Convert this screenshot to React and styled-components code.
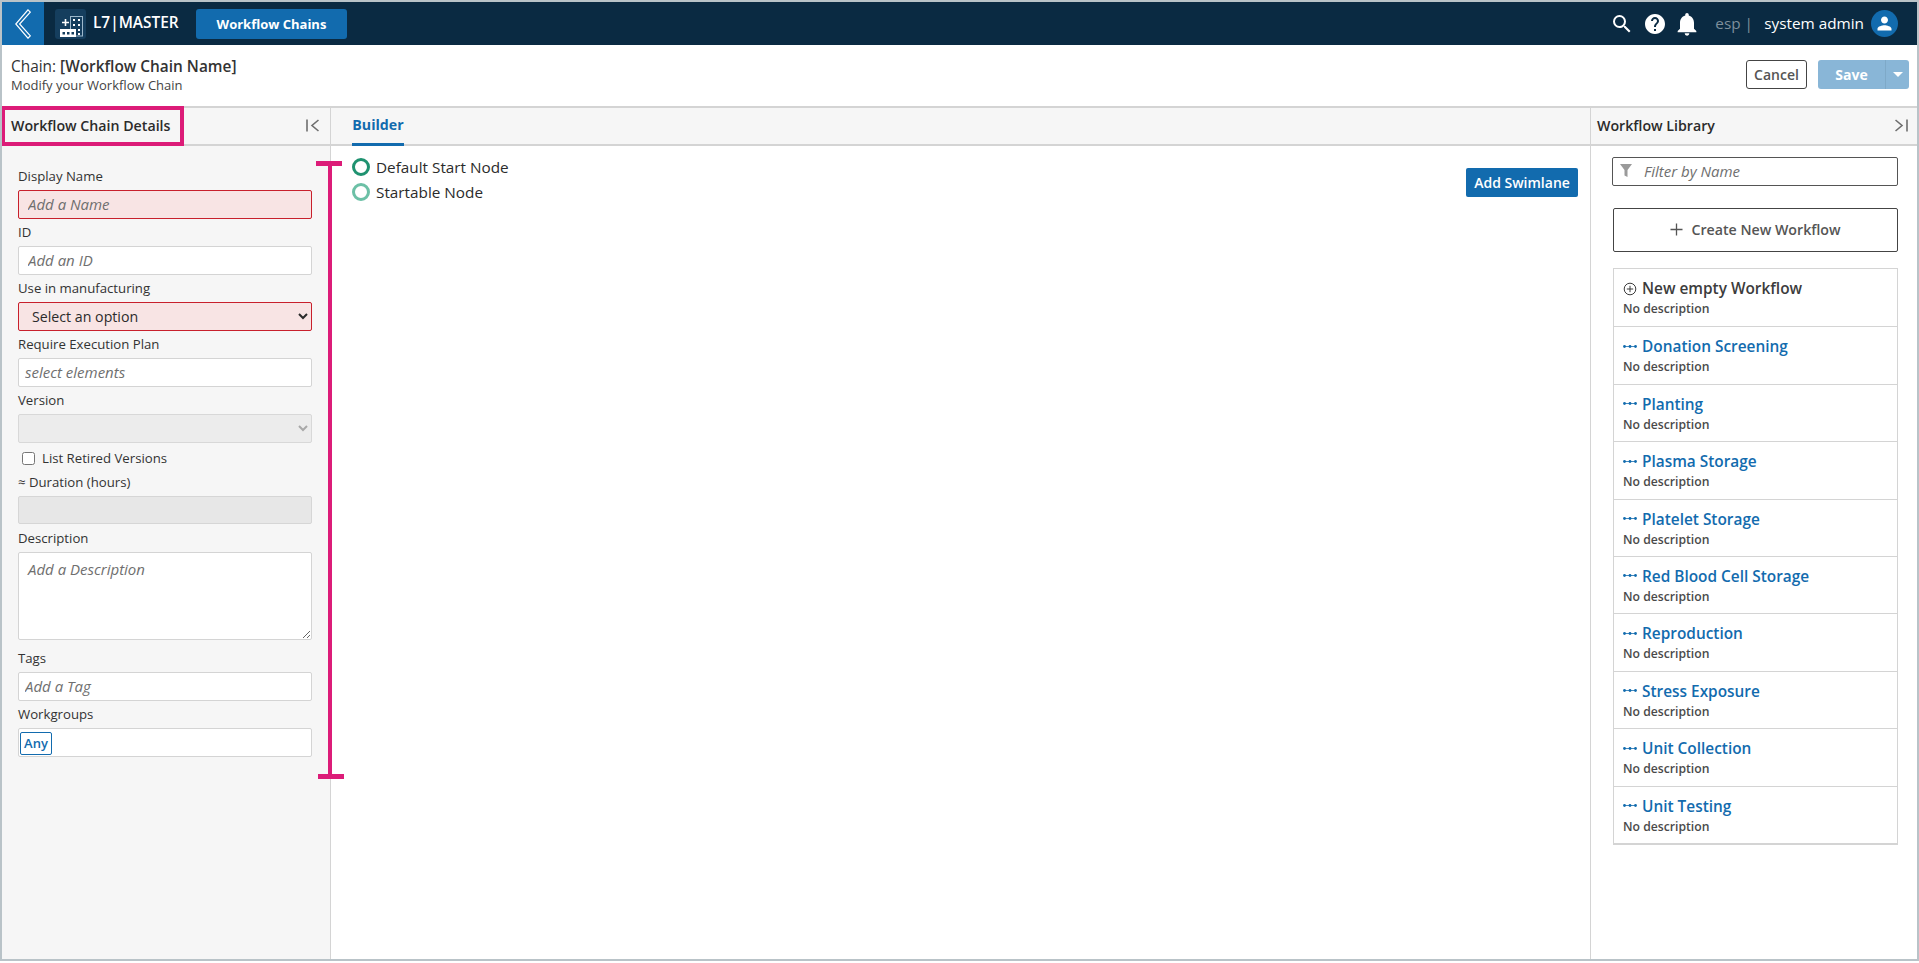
import React from 'react';
import styled, { createGlobalStyle } from 'styled-components';
import { MdSearch, MdHelp, MdNotifications, MdPerson } from 'react-icons/md';

const Global = createGlobalStyle`
  html, body { margin: 0; padding: 0; background: #fff; }
  body { font-family: "Open Sans", "Liberation Sans", sans-serif; color: #2b2b2b; }
  * { box-sizing: border-box; }
`;

const Frame = styled.div`
  position: relative;
  width: 1919px;
  height: 961px;
  border: 2px solid #b9c3c8;
  display: flex;
  flex-direction: column;
  overflow: hidden;
  background: #fff;
`;

const TopBar = styled.header`
  height: 43px;
  background: #0a2a42;
  display: flex;
  align-items: center;
  color: #fff;
  flex: none;
`;
const BackButton = styled.div`
  width: 42px;
  height: 43px;
  background: #126bae;
  display: flex;
  align-items: center;
  justify-content: center;
  flex: none;
`;
const LogoTile = styled.div`
  width: 31px;
  height: 30px;
  margin-left: 11px;
  border-radius: 3px;
  background: #153e5e;
  display: flex;
  align-items: center;
  justify-content: center;
`;
const Brand = styled.div`
  margin-left: 7px;
  font-size: 15.4px;
  font-weight: 600;
  width: 103px;
  white-space: nowrap;
  padding-bottom: 2px;
`;
const NavButton = styled.div`
  width: 151px;
  height: 30px;
  border-radius: 3px;
  background: #126bae;
  font-size: 13px;
  font-weight: 700;
  display: flex;
  align-items: center;
  justify-content: center;
`;
const TopRight = styled.div`
  margin-left: auto;
  display: flex;
  align-items: center;
  padding-right: 19px;
`;
const Lang = styled.span`
  font-size: 15.3px;
  color: #7e8f9c;
  margin-left: 14px;
  width: 49px;
  white-space: nowrap;
  padding-bottom: 2px;
`;
const UserName = styled.span`
  font-size: 15.3px;
  margin-right: 7px;
  white-space: nowrap;
  padding-bottom: 2px;
`;
const Avatar = styled.div`
  width: 27px;
  height: 27px;
  border-radius: 50%;
  background: #126bae;
  display: flex;
  align-items: center;
  justify-content: center;
`;
const IconSlot = styled.span`
  display: flex;
  margin-left: ${p => p.$ml || 0}px;
`;

const TitleBar = styled.div`
  height: 63px;
  flex: none;
  border-bottom: 2px solid #d4d4d4;
  display: flex;
  align-items: center;
  justify-content: space-between;
  padding: 0 8px 0 9px;
`;
const TitleBlock = styled.div`
  padding-bottom: 2px;
`;
const TitleMain = styled.div`
  font-size: 15.4px;
  line-height: 20px;
  color: #333;
  b { font-weight: 600; }
`;
const TitleSub = styled.div`
  font-size: 13px;
  line-height: 16px;
  color: #444;
`;
const Actions = styled.div`
  display: flex;
  gap: 11px;
  margin-top: -3px;
`;
const CancelButton = styled.div`
  width: 61px;
  height: 29px;
  border: 1px solid #444;
  border-radius: 3px;
  font-size: 14px;
  font-weight: 600;
  color: #555;
  display: flex;
  align-items: center;
  justify-content: center;
`;
const SaveButton = styled.div`
  width: 91px;
  height: 29px;
  border-radius: 3px;
  background: #89b6d7;
  color: #fff;
  font-size: 14px;
  font-weight: 700;
  display: flex;
`;
const SaveLabel = styled.span`
  flex: 1;
  display: flex;
  align-items: center;
  justify-content: center;
`;
const SaveCaret = styled.span`
  width: 24px;
  border-left: 1px solid #7ea9c8;
  display: flex;
  align-items: center;
  justify-content: center;
  &::after {
    content: "";
    border-left: 5px solid transparent;
    border-right: 5px solid transparent;
    border-top: 5px solid #fff;
  }
`;

const Body = styled.div`
  flex: 1;
  display: flex;
  min-height: 0;
`;
const LeftPanel = styled.aside`
  width: 329px;
  flex: none;
  background: #f6f6f6;
  border-right: 1px solid #d4d4d4;
  display: flex;
  flex-direction: column;
`;
const Center = styled.main`
  flex: 1;
  display: flex;
  flex-direction: column;
  min-width: 0;
`;
const RightPanel = styled.aside`
  width: 327px;
  flex: none;
  border-left: 1px solid #d4d4d4;
  display: flex;
  flex-direction: column;
`;
const PanelHead = styled.div`
  height: 38px;
  flex: none;
  background: #f6f6f6;
  border-bottom: 2px solid #d4d4d4;
  display: flex;
  align-items: center;
  justify-content: space-between;
  padding: 0 ${p => p.$pr}px 2px ${p => p.$pl}px;
  font-size: 14.2px;
  font-weight: 600;
  color: #2b2b2b;
`;
const Form = styled.div`
  padding: 20px 0 0 16px;
  width: 310px;
`;
const Label = styled.div`
  font-size: 13.2px;
  line-height: 17px;
  height: ${p => p.$h || 27}px;
  padding-top: ${p => p.$pt ?? 5}px;
  color: #333;
  white-space: nowrap;
`;
const inputBase = `
  display: block;
  width: 294px;
  height: 29px;
  border-radius: 2px;
  font-family: "Open Sans", sans-serif;
  font-size: 15px;
  outline: none;
  &::placeholder { color: #6f6f6f; font-style: italic; opacity: 1; }
`;
const TextInput = styled.input`
  ${inputBase}
  background: ${p => (p.$error ? '#f8e4e4' : '#fff')};
  border: 1px solid ${p => (p.$error ? '#c8202c' : '#d4d4d4')};
  padding: 0 ${p => p.$pl || 9}px 2px;
`;
const DisabledInput = styled.div`
  width: 294px;
  height: 28px;
  border-radius: 2px;
  background: #e7e7e7;
  border: 1px solid #d6d6d6;
`;
const Select = styled.select`
  ${inputBase}
  font-size: 14.2px;
  background: ${p => (p.$error ? '#f8e4e4' : '#ececec')};
  border: 1px solid ${p => (p.$error ? '#c8202c' : '#d8d8d8')};
  color: ${p => (p.disabled ? '#a8a8a8' : '#2b2b2b')};
  opacity: 1;
  padding-left: 9px;
  padding-right: 2px;
`;
const CheckRow = styled.label`
  display: flex;
  align-items: center;
  gap: 7px;
  height: 30px;
  padding-left: 4px;
  font-size: 13.2px;
  color: #333;
  input { margin: 0; width: 13px; height: 13px; }
`;
const TextArea = styled.textarea`
  ${inputBase}
  height: 88px;
  background: #fff;
  border: 1px solid #d4d4d4;
  padding: 6px 9px;
`;
const ChipBox = styled.div`
  width: 294px;
  height: 29px;
  background: #fff;
  border: 1px solid #d4d4d4;
  border-radius: 2px;
  padding: 2px 1px;
`;
const Chip = styled.span`
  display: inline-flex;
  align-items: center;
  justify-content: center;
  width: 32px;
  height: 23px;
  border: 1px solid #126bae;
  border-radius: 2px;
  color: #126bae;
  font-size: 13px;
  font-weight: 600;
`;

const Tabs = styled.div`
  height: 38px;
  flex: none;
  background: #f6f6f6;
  border-bottom: 2px solid #d4d4d4;
  padding-left: 21px;
  display: flex;
`;
const Tab = styled.div`
  width: 52px;
  height: 38px;
  border-bottom: 3px solid #126bae;
  color: #126bae;
  font-size: 14.2px;
  font-weight: 700;
  display: flex;
  align-items: center;
  justify-content: center;
  padding-bottom: 2px;
`;
const Canvas = styled.div`
  flex: 1;
  display: flex;
  justify-content: space-between;
  align-items: flex-start;
  padding: 8px 12px 0 21px;
`;
const Legend = styled.div`
  display: flex;
  flex-direction: column;
`;
const LegendRow = styled.div`
  display: flex;
  align-items: center;
  height: 25px;
  gap: 6px;
  font-size: 15.3px;
  color: #2b2b2b;
`;
const Ring = styled.span`
  width: 18px;
  height: 18px;
  border-radius: 50%;
  border: 3px solid ${p => p.$color};
  margin-top: 1px;
`;
const SwimButton = styled.div`
  width: 112px;
  height: 29px;
  margin-top: 14px;
  border-radius: 2px;
  background: #126bae;
  color: #fff;
  font-size: 14px;
  font-weight: 600;
  display: flex;
  align-items: center;
  justify-content: center;
`;

const Library = styled.div`
  padding: 11px 19px 0 22px;
  display: flex;
  flex-direction: column;
`;
const Filter = styled.div`
  height: 29px;
  border: 1px solid #555;
  border-radius: 2px;
  margin-left: -1px;
  display: flex;
  align-items: center;
  padding: 0 0 2px 7px;
  gap: 12px;
  font-size: 15px;
  font-style: italic;
  color: #6f6f6f;
`;
const CreateButton = styled.div`
  height: 44px;
  margin-top: 22px;
  border: 1px solid #444;
  border-radius: 2px;
  display: flex;
  align-items: center;
  justify-content: center;
  gap: 8px;
  padding-bottom: 2px;
  font-size: 14.2px;
  font-weight: 600;
  color: #555;
`;
const List = styled.div`
  margin-top: 16px;
  border: 1px solid #d4d4d4;
  border-bottom-width: 2px;
  display: grid;
  grid-auto-rows: 57.4px;
`;
const Row = styled.div`
  padding: 7px 9px 0;
  border-top: ${p => (p.$first ? 'none' : '1px solid #d4d4d4')};
`;
const RowTitle = styled.div`
  display: flex;
  align-items: center;
  gap: 5px;
  height: 25px;
  font-size: 15.4px;
  font-weight: 600;
  color: ${p => (p.$muted ? '#3c3c3c' : '#126bae')};
  white-space: nowrap;
`;
const RowSub = styled.div`
  font-size: 12.2px;
  line-height: 16px;
  font-weight: 600;
  color: #4a4a4a;
`;

const PinkBox = styled.div`
  position: absolute;
  left: -1px;
  top: 104px;
  width: 183px;
  height: 40px;
  border: 4px solid #dc1c78;
`;
const BracketBar = styled.div`
  position: absolute;
  left: 326px;
  top: 161px;
  width: 4px;
  height: 616px;
  background: #dc1c78;
`;
const BracketCap = styled.div`
  position: absolute;
  left: ${p => p.$left}px;
  top: ${p => p.$top}px;
  width: 26px;
  height: 5px;
  background: #dc1c78;
`;

const BackIcon = () => (
  <svg width="16" height="30" viewBox="0 0 16 30" fill="none" stroke="#fff" strokeWidth="1.2" strokeLinejoin="miter">
    <path d="M13 0.8 L15.3 3.2 L4.6 15 L15.3 26.8 L13 29.2 L0.8 15 Z" />
  </svg>
);
const LogoIcon = () => (
  <svg width="31" height="30" viewBox="0 0 31 30">
    <rect x="15.5" y="7.5" width="12" height="19.5" fill="none" stroke="#9db8cc" strokeWidth="1" />
    <g fill="#fff">
      <rect x="18" y="10" width="2" height="2" /><rect x="23" y="10" width="2" height="2" />
      <rect x="18" y="15" width="2" height="2" /><rect x="23" y="15" width="2" height="2" />
      <rect x="23" y="20" width="2" height="2" /><rect x="23" y="24" width="2" height="2" />
      <path d="M7 12.7h7v1.6H7zM9.7 10h1.6v7H9.7z" />
      <path fillRule="evenodd" d="M5 20h16v8H5z M7.5 23v2.5H10V23z M12 23v2.5h2.5V23z M16.5 23v2.5H19V23z" />
    </g>
  </svg>
);
const CollapseLeft = () => (
  <svg width="13" height="13" viewBox="0 0 13 13" fill="none" stroke="#6e6e6e" strokeWidth="1.6">
    <path d="M1 0.5v12M12.5 1 L6 6.5 L12.5 12" />
  </svg>
);
const CollapseRight = () => (
  <svg width="13" height="13" viewBox="0 0 13 13" fill="none" stroke="#6e6e6e" strokeWidth="1.6">
    <path d="M12 0.5v12M0.5 1 L7 6.5 L0.5 12" />
  </svg>
);
const FunnelIcon = () => (
  <svg width="12" height="13" viewBox="0 0 12 13" fill="#9a9a9a">
    <path d="M0 0h12L7.5 6v7l-3-1.5V6z" />
  </svg>
);
const PlusIcon = () => (
  <svg width="13" height="13" viewBox="0 0 13 13" stroke="#555" strokeWidth="1.3">
    <path d="M6.5 0.5v12M0.5 6.5h12" />
  </svg>
);
const CirclePlus = () => (
  <svg width="14" height="14" viewBox="0 0 14 14" fill="none" stroke="#3c3c3c" strokeWidth="1">
    <circle cx="7" cy="7" r="5.8" />
    <path d="M7 3.8v6.4M3.8 7h6.4" />
  </svg>
);
const ChainIcon = () => (
  <svg width="14" height="14" viewBox="0 0 14 14" fill="#126bae" stroke="#126bae">
    <path d="M1 6.5h12" strokeWidth="0.8" />
    <circle cx="1.5" cy="6.5" r="1.4" strokeWidth="0" />
    <circle cx="7" cy="6.5" r="1.4" strokeWidth="0" />
    <circle cx="12.5" cy="6.5" r="1.4" strokeWidth="0" />
  </svg>
);

const workflows = [
  'Donation Screening', 'Planting', 'Plasma Storage', 'Platelet Storage', 'Red Blood Cell Storage',
  'Reproduction', 'Stress Exposure', 'Unit Collection', 'Unit Testing',
];

export default function App() {
  return (
    <>
      <Global />
      <Frame>
        <TopBar>
          <BackButton><BackIcon /></BackButton>
          <LogoTile><LogoIcon /></LogoTile>
          <Brand>L7|MASTER</Brand>
          <NavButton>Workflow Chains</NavButton>
          <TopRight>
            <IconSlot><MdSearch size={24} color="#fff" /></IconSlot>
            <IconSlot $ml={9}><MdHelp size={24} color="#fff" /></IconSlot>
            <IconSlot $ml={6}><MdNotifications size={28} color="#fff" /></IconSlot>
            <Lang>esp |</Lang>
            <UserName>system admin</UserName>
            <Avatar><MdPerson size={21} color="#fff" /></Avatar>
          </TopRight>
        </TopBar>
        <TitleBar>
          <TitleBlock>
            <TitleMain>Chain: <b>[Workflow Chain Name]</b></TitleMain>
            <TitleSub>Modify your Workflow Chain</TitleSub>
          </TitleBlock>
          <Actions>
            <CancelButton>Cancel</CancelButton>
            <SaveButton><SaveLabel>Save</SaveLabel><SaveCaret /></SaveButton>
          </Actions>
        </TitleBar>
        <Body>
          <LeftPanel>
            <PanelHead $pl={9} $pr={11}>Workflow Chain Details <CollapseLeft /></PanelHead>
            <Form>
              <Label $h={24} $pt={2}>Display Name</Label>
              <TextInput $error placeholder="Add a Name" />
              <Label>ID</Label>
              <TextInput placeholder="Add an ID" />
              <Label>Use in manufacturing</Label>
              <Select $error defaultValue="">
                <option value="">Select an option</option>
              </Select>
              <Label>Require Execution Plan</Label>
              <TextInput $pl={6} placeholder="select elements" />
              <Label>Version</Label>
              <Select disabled defaultValue=""><option value=""></option></Select>
              <CheckRow><input type="checkbox" />List Retired Versions</CheckRow>
              <Label $h={23} $pt={1}>≈ Duration (hours)</Label>
              <DisabledInput />
              <Label $h={28} $pt={6}>Description</Label>
              <TextArea placeholder="Add a Description" />
              <Label $h={32} $pt={10}>Tags</Label>
              <TextInput $pl={6} placeholder="Add a Tag" />
              <Label>Workgroups</Label>
              <ChipBox><Chip>Any</Chip></ChipBox>
            </Form>
          </LeftPanel>
          <Center>
            <Tabs><Tab>Builder</Tab></Tabs>
            <Canvas>
              <Legend>
                <LegendRow><Ring $color="#1f9270" />Default Start Node</LegendRow>
                <LegendRow><Ring $color="#6cc0a6" />Startable Node</LegendRow>
              </Legend>
              <SwimButton>Add Swimlane</SwimButton>
            </Canvas>
          </Center>
          <RightPanel>
            <PanelHead $pl={6} $pr={9}>Workflow Library <CollapseRight /></PanelHead>
            <Library>
              <Filter><FunnelIcon />Filter by Name</Filter>
              <CreateButton><PlusIcon />Create New Workflow</CreateButton>
              <List>
                <Row $first>
                  <RowTitle $muted><CirclePlus />New empty Workflow</RowTitle>
                  <RowSub>No description</RowSub>
                </Row>
                {workflows.map(name => (
                  <Row key={name}>
                    <RowTitle><ChainIcon />{name}</RowTitle>
                    <RowSub>No description</RowSub>
                  </Row>
                ))}
              </List>
            </Library>
          </RightPanel>
        </Body>
        <PinkBox />
        <BracketBar />
        <BracketCap $left={314} $top={159} />
        <BracketCap $left={316} $top={772} />
      </Frame>
    </>
  );
}
